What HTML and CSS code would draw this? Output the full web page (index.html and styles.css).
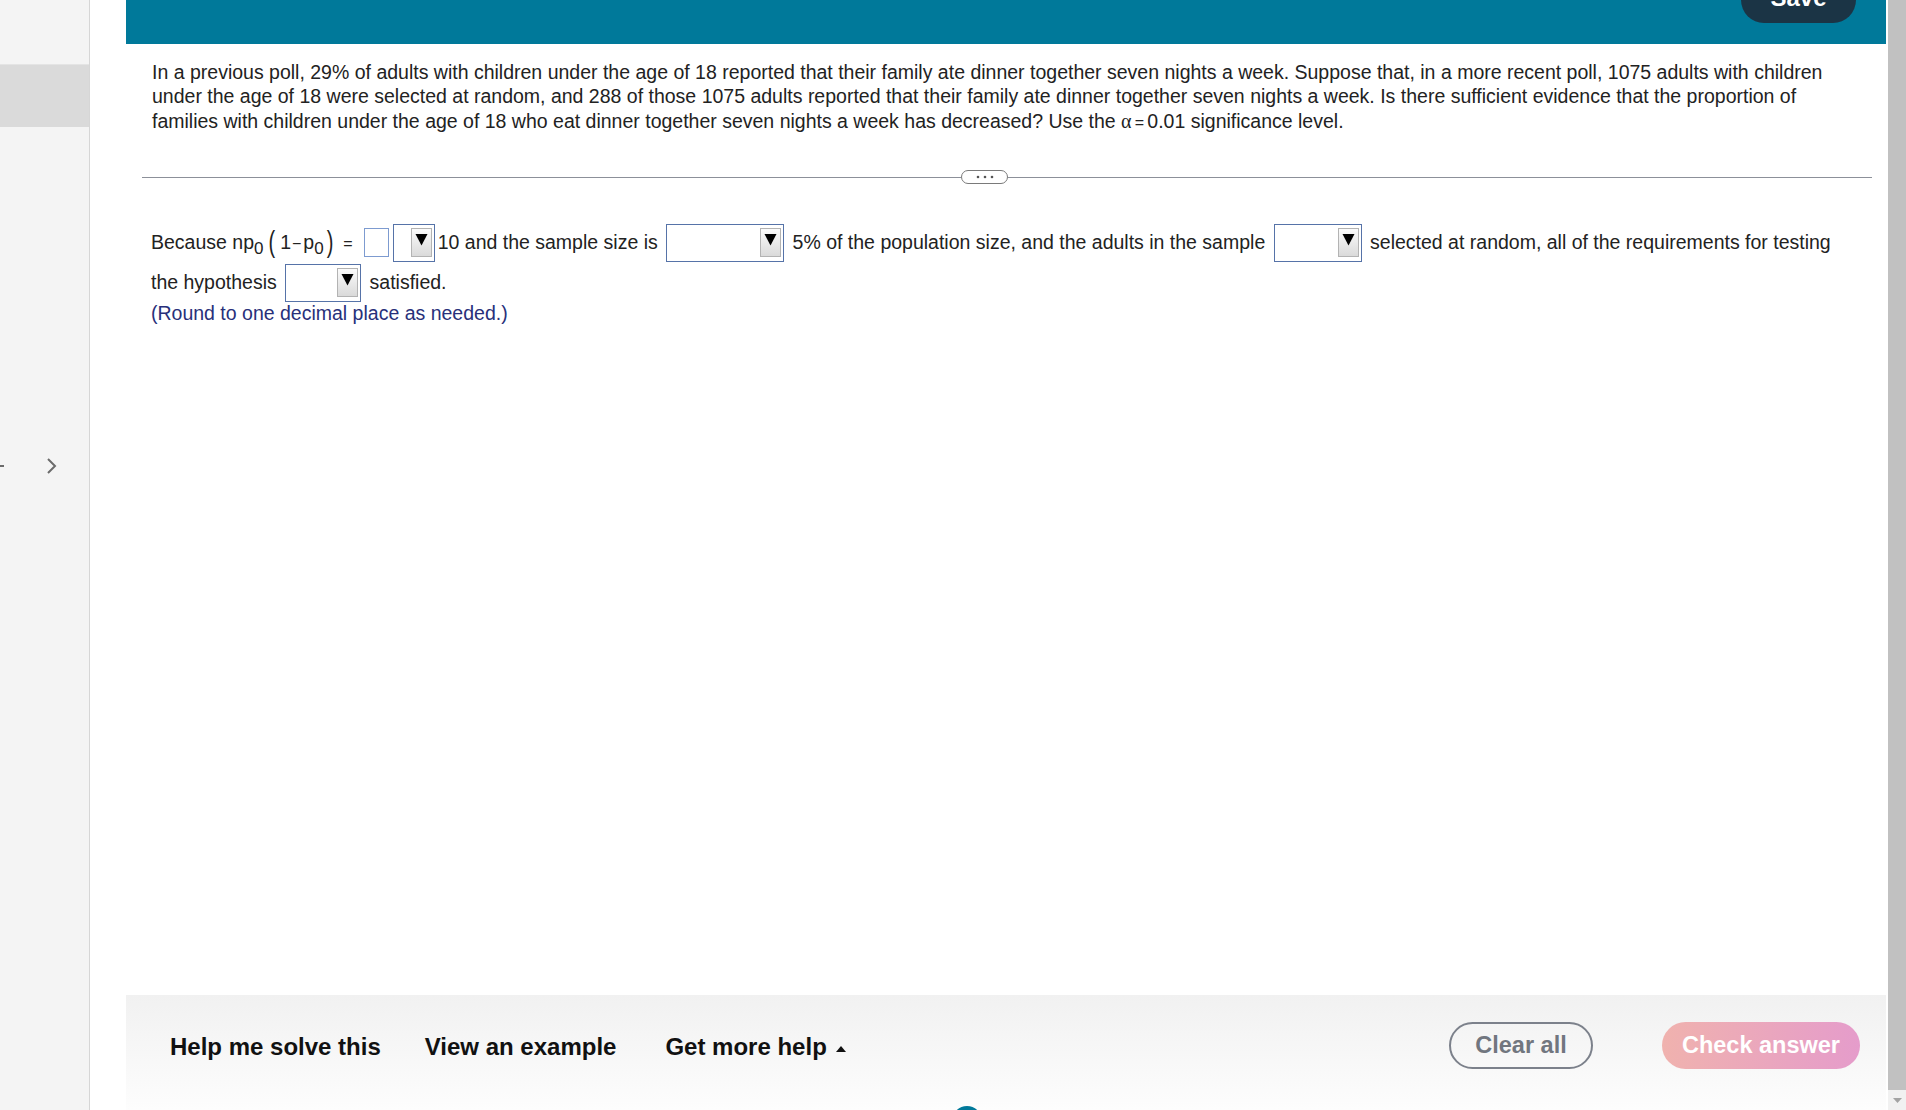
FILE: index.html
```html
<!DOCTYPE html>
<html lang="en">
<head>
    <title>Hypothesis Test - Question</title>
    <meta charset="UTF-8" />
    <meta name="viewport" content="width=device-width, initial-scale=1.0" />
    <link rel="stylesheet" href="styles.css">
</head>
<body>
    <div class="app">
        <aside class="sidebar">
            <div class="side-item"></div>
            <div class="side-nav">
                <span class="side-mark"></span>
                <svg class="side-arrow" width="12" height="18" viewBox="0 0 12 18">
                    <polyline points="2,2 9,9 2,16" fill="none" stroke="#6b6b6b" stroke-width="2" />
                </svg>
            </div>
        </aside>

        <main class="panel">
            <header class="topbar">
                <button class="save-btn">Save</button>
            </header>

            <p class="stem">In a previous poll, 29% of adults with children under the age of 18 reported that their family ate dinner together seven nights a week. Suppose that, in a more recent poll, 1075 adults with children under the age of 18 were selected at random, and 288 of those 1075 adults reported that their family ate dinner together seven nights a week. Is there sufficient evidence that the proportion of families with children under the age of 18 who eat dinner together seven nights a week has decreased? Use the <span class="greek">α</span><span class="op">&thinsp;=&thinsp;</span>0.01 significance level.</p>

            <div class="divider">
                <span class="rule rule-left"></span>
                <span class="more">
                    <svg width="20" height="4" viewBox="0 0 20 4">
                        <circle cx="3" cy="2" r="1.3" fill="#555" />
                        <circle cx="10" cy="2" r="1.3" fill="#555" />
                        <circle cx="17" cy="2" r="1.3" fill="#555" />
                    </svg>
                </span>
                <span class="rule"></span>
            </div>

            <div class="answer">
                <p class="answer-text">Because np<sub class="sub">0</sub><span class="paren paren-open">(</span>1<span class="op minus">−</span>p<sub class="sub">0</sub><span class="paren paren-close">)</span><span class="op eq">=</span><span class="blank"></span><span class="dd dd-1"><span class="dd-btn"><svg width="13" height="13" viewBox="0 0 13 13"><polygon points="0.5,1 12.5,1 6.5,12.5" fill="#000" /></svg></span></span>10 and the sample size is <span class="dd dd-2"><span class="dd-btn"><svg width="13" height="13" viewBox="0 0 13 13"><polygon points="0.5,1 12.5,1 6.5,12.5" fill="#000" /></svg></span></span> 5% of the population size, and the adults in the sample <span class="dd dd-3"><span class="dd-btn"><svg width="13" height="13" viewBox="0 0 13 13"><polygon points="0.5,1 12.5,1 6.5,12.5" fill="#000" /></svg></span></span> selected at random, all of the requirements for testing the hypothesis <span class="dd dd-4"><span class="dd-btn"><svg width="13" height="13" viewBox="0 0 13 13"><polygon points="0.5,1 12.5,1 6.5,12.5" fill="#000" /></svg></span></span> satisfied.</p>
                <p class="note">(Round to one decimal place as needed.)</p>
            </div>

            <footer class="helpbar">
                <div class="help-links">
                    <a class="help-link">Help me solve this</a>
                    <a class="help-link">View an example</a>
                    <a class="help-link">Get more help
                        <svg class="caret" width="10" height="7" viewBox="0 0 10 7"><polygon points="0,7 10,7 5,1" fill="#111" /></svg>
                    </a>
                </div>
                <div class="actions">
                    <button class="btn btn-clear">Clear all</button>
                    <button class="btn btn-check">Check answer</button>
                </div>
            </footer>

            <span class="float-dot"></span>
        </main>

        <div class="scrollbar">
            <div class="scroll-thumb"></div>
            <div class="scroll-down">
                <svg width="9" height="5" viewBox="0 0 9 5"><polygon points="0,0 9,0 4.5,5" fill="#a3a3a3" /></svg>
            </div>
        </div>
    </div>
</body>
</html>
```

FILE: styles.css
```css
* {
    box-sizing: border-box;
}

html, body {
    margin: 0;
    height: 100%;
}

body {
    font-family: "Liberation Sans", Arial, sans-serif;
    color: #222;
    background: #fff;
    overflow: hidden;
}

.app {
    display: flex;
    height: 1110px;
}

/* left rail */
.sidebar {
    width: 90px;
    flex: none;
    background: #f4f4f4;
    border-right: 1px solid #d6d6d6;
    display: flex;
    flex-direction: column;
    padding-top: 64px;
}

.side-item {
    height: 63px;
    background: #dadada;
    border-top: 1px solid #e4e4e4;
}

.side-nav {
    margin-top: 329px;
    height: 20px;
    display: flex;
    align-items: center;
}

.side-mark {
    width: 4px;
    height: 2px;
    background: #6b6b6b;
}

.side-arrow {
    margin-left: 42px;
}

/* main panel */
.panel {
    position: relative;
    width: 1760px;
    margin-left: 36px;
    display: flex;
    flex-direction: column;
}

.topbar {
    height: 44px;
    flex: none;
    background: #00799a;
    display: flex;
    justify-content: flex-end;
    padding-right: 30px;
}

.save-btn {
    width: 115px;
    height: 46px;
    margin-top: -23px;
    padding: 0 0 5px;
    border: none;
    border-radius: 23px;
    background: #1b3445;
    color: #fff;
    font-family: inherit;
    font-size: 24px;
    font-weight: 700;
}

.stem {
    margin: 0;
    padding: 16px 34px 0 26px;
    font-size: 19.5px;
    line-height: 24.4px;
}

.greek {
    font-family: "Liberation Serif", serif;
    font-size: 20px;
}

.op {
    font-size: 16px;
}

.divider {
    display: flex;
    align-items: center;
    height: 14px;
    margin: 35px 14px 0 16px;
}

.rule {
    flex: 1;
    height: 1px;
    background: #8c9099;
}

.rule-left {
    flex: none;
    width: 819px;
}

.more {
    width: 47px;
    height: 14px;
    border: 1px solid #7a7a7a;
    border-radius: 8px;
    display: flex;
    align-items: center;
    justify-content: center;
}

.answer {
    margin-top: 39.5px;
    padding: 0 34px 0 25px;
    font-size: 19.5px;
}

.answer-text {
    margin: 0;
    line-height: 37px;
}

.sub {
    font-size: 17px;
    vertical-align: -5px;
    line-height: 0;
}

/* tall thin brackets around 1 - p0 */
.paren {
    display: inline-block;
    font-size: 20px;
    line-height: 20px;
    transform: scaleY(1.5);
    transform-origin: 50% 60%;
}

.paren-open {
    margin: 0 5px 0 5px;
}

.paren-close {
    margin: 0 0 0 3px;
}

.minus {
    margin: 0 2px 0 1px;
}

.eq {
    margin-left: 10px;
}

.blank {
    display: inline-block;
    vertical-align: middle;
    width: 25px;
    height: 29px;
    border: 1px solid #7d9bd0;
    margin: 0 1px 2px 11px;
}

.dd {
    display: inline-flex;
    justify-content: flex-end;
    vertical-align: middle;
    height: 38px;
    border: 1px solid #5673a8;
    background: #fff;
    padding: 3px 2px 4px;
    margin: 0 3px 2px;
}

.dd-1 { width: 42px; }
.dd-2 { width: 118px; }
.dd-3 { width: 88px; }
.dd-4 { width: 76px; }

.dd-btn {
    width: 21px;
    height: 29px;
    border: 1px solid #b3b3b3;
    background: linear-gradient(#fbfbfb, #dadada);
    display: flex;
    justify-content: center;
    padding-top: 4px;
}

.note {
    margin: -3px 0 0;
    line-height: 24px;
    color: #28307a;
}

/* bottom help bar */
.helpbar {
    margin-top: auto;
    height: 115px;
    flex: none;
    background: linear-gradient(#f1f1f1, #fdfdfd);
    display: flex;
    align-items: flex-start;
    padding: 27px 26px 0 44px;
}

.help-links {
    display: flex;
    align-items: center;
    height: 49px;
    gap: 44px;
}

.help-link {
    font-size: 24px;
    font-weight: 700;
    color: #111;
    cursor: pointer;
}

.help-links .help-link:last-child {
    margin-left: 5px;
}

.caret {
    margin-left: 3px;
    vertical-align: 3px;
}

.actions {
    margin-left: auto;
    display: flex;
    gap: 69px;
}

.btn {
    height: 47px;
    border-radius: 24px;
    font-family: inherit;
    font-size: 23.5px;
    font-weight: 700;
    cursor: pointer;
}

.btn-clear {
    width: 144px;
    background: transparent;
    border: 2.5px solid #7c818b;
    color: #71767f;
}

.btn-check {
    width: 198px;
    border: none;
    background: linear-gradient(90deg, #f0b2ae, #e59ccb);
    color: #fff;
}

.float-dot {
    position: absolute;
    left: 826px;
    bottom: -26px;
    width: 30px;
    height: 30px;
    border-radius: 50%;
    background: #00799a;
}

/* fake scrollbar */
.scrollbar {
    width: 18px;
    flex: none;
    margin-left: 2px;
    background: #f1f1f1;
    display: flex;
    flex-direction: column;
}

.scroll-thumb {
    flex: 1;
    background: #c1c1c1;
}

.scroll-down {
    height: 20px;
    display: flex;
    align-items: center;
    justify-content: center;
}
```
